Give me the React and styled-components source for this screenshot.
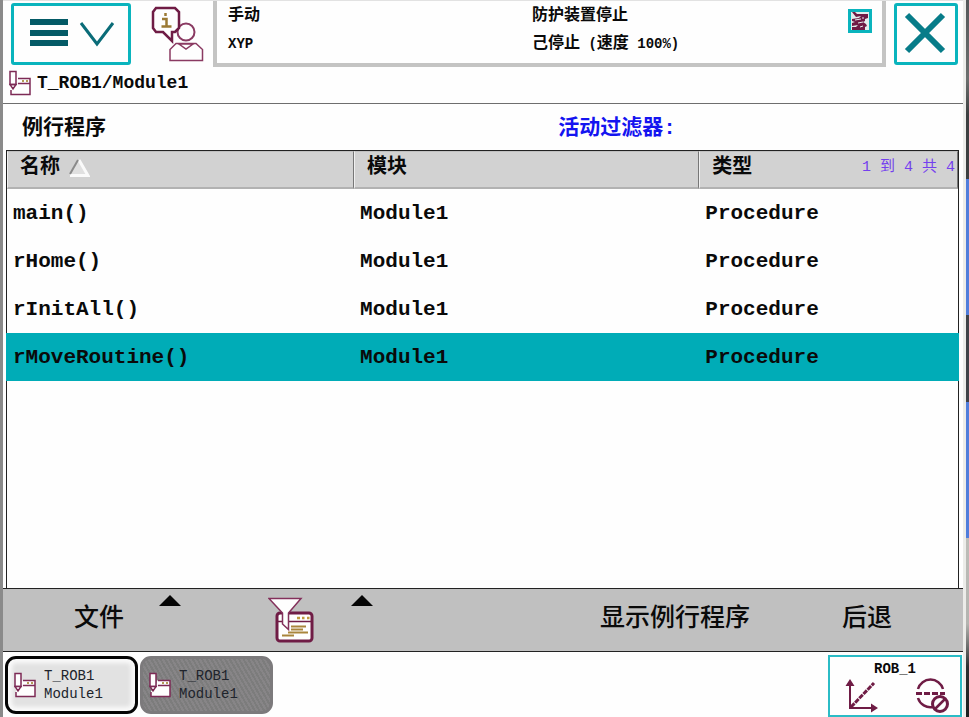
import React from "react";
import styled, { createGlobalStyle } from "styled-components";

const MONO = '"Liberation Mono", "Noto Sans CJK SC", monospace';
const PLUM = "#6f1c45";
const TEAL = "#0ab4bd";

const GlobalStyle = createGlobalStyle`
  *, *::before, *::after { box-sizing: border-box; }
  body { margin: 0; background: #fefefe; }
  button { font: inherit; color: inherit; padding: 0; margin: 0; border: 0; border-radius: 0; background: none; cursor: pointer; }
`;

const Page = styled.div`
  display: flex;
  min-height: 100vh;
  border-left: 3px solid #8a8a8a;
  font-family: ${MONO};
  font-weight: 700;
  color: #0a0a0a;
`;

const Screen = styled.div`
  flex: 1;
  min-width: 0;
  display: flex;
  flex-direction: column;
  border-top: 1px solid #e2e2e2;
  background: #fefefe;
`;

const DesktopEdge = styled.div`
  width: 6px;
  border-left: 3px solid #ecece9;
  background: linear-gradient(
    #55585a 0, #6c6f6e 11%, #3c3f40 16%, #3c3f40 25%,
    #4f7ddb 25%, #4f7ddb 44%, #404348 44%, #404348 56%,
    #4f7ddb 56%, #4f7ddb 75%, #bdbdb8 75%, #b4b4b0 87%,
    #2c2e30 93%, #1c1d1e 100%
  );
`;

const TopBar = styled.header`
  display: flex;
  height: 66px;
`;

const MenuButton = styled.button`
  width: 120px;
  height: 62px;
  margin: 2px 0 0 8px;
  border: 3px solid ${TEAL};
  border-radius: 3px;
  background: #fefefe;
  svg { display: block; }
`;

const CloseButton = styled(MenuButton)`
  width: 64px;
  margin: 2px 5px 0 8px;
`;

const OperatorButton = styled.button`
  display: flex;
  width: 82px;
  padding: 5px 0 0 20px;
`;

const StatusPanel = styled.section`
  flex: 1;
  display: grid;
  grid-template-columns: 304px 1fr auto;
  padding: 0 10px 0 11px;
  border: solid #c4c4c3;
  border-width: 0 4px 4px;
`;

const StatusColumn = styled.div`
  padding-top: 1px;
  font-size: 16px;
  line-height: 28px;
  white-space: nowrap;
`;

const Latin = styled.span`
  font-size: 14px;
`;

const UnitBadge = styled.span`
  display: block;
  width: 24px;
  height: 24px;
  margin-top: 8px;
  border: 3px solid ${TEAL};
  background: #e4eeee;
  svg { display: block; }
`;

const PathBar = styled.div`
  display: flex;
  align-items: center;
  gap: 6px;
  height: 37px;
  padding: 0 0 4px 6px;
  border-bottom: 1px solid #6e6e6e;
  font-size: 18px;
`;

const FilterBar = styled.div`
  display: grid;
  grid-template-columns: 57% 1fr;
  align-items: center;
  height: 46px;
  padding: 0 0 4px 19px;
  font-size: 21px;
`;

const ActiveFilter = styled.span`
  color: #1414f0;
`;

const ListFrame = styled.div`
  flex: 1;
  margin: 0 4px 0 3px;
  border: solid #222;
  border-width: 1px 1px 0;
`;

const Table = styled.table`
  width: 100%;
  table-layout: fixed;
  border-collapse: separate;
  border-spacing: 0;
`;

const Heading = styled.th`
  width: ${(p) => p.$width};
  height: 38px;
  padding: 0 2px 4px 12px;
  background: #d2d2d2;
  border: solid;
  border-width: 1px 1px 2px;
  border-color: #c0c0c0 #777 #b2b2b2 #f0f0f0;
  text-align: left;
  font-size: 20px;
  line-height: 24px;
`;

const HeadingContent = styled.div`
  display: flex;
  align-items: center;
  justify-content: ${(p) => (p.$spread ? "space-between" : "flex-start")};
  gap: 8px;
  white-space: nowrap;
`;

const RecordCount = styled.span`
  color: #7440ee;
  font-size: 15px;
  font-weight: 400;
`;

const Row = styled.tr`
  height: 48px;
  background: ${(p) => (p.$selected ? "#00acb7" : "transparent")};
  box-shadow: ${(p) => (p.$selected ? "-1px 0 #00acb7, 1px 0 #00acb7" : "none")};
`;

const Cell = styled.td`
  padding: 2px 0 0 6px;
  font-size: 21px;
  line-height: 24px;
  white-space: nowrap;
`;

const CommandBar = styled.nav`
  display: grid;
  grid-template-columns: repeat(5, 1fr);
  height: 64px;
  border: solid #222;
  border-width: 1px 0;
  background: #c0c0c0;
`;

const Command = styled.button`
  position: relative;
  grid-column: ${(p) => p.$slot};
  display: flex;
  align-items: center;
  justify-content: center;
  font-size: 25px;
  font-weight: 500;
  line-height: 36px;
  white-space: nowrap;
`;

const Caret = styled.svg`
  position: absolute;
  top: 6px;
  right: 14px;
`;

const TaskBar = styled.footer`
  display: flex;
  gap: 2px;
  height: 65px;
  padding: 3px 1px 0 2px;
`;

const TaskTab = styled.button`
  display: flex;
  align-items: center;
  gap: 8px;
  width: 133px;
  height: 58px;
  margin-top: 1px;
  padding-left: 6px;
  border: 3px solid ${(p) => (p.$active ? "#050505" : "#7c7a7c")};
  border-radius: 11px;
  background: ${(p) =>
    p.$active
      ? "#e2e2e2"
      : "repeating-linear-gradient(60deg, #7c7c7c 0, #7c7c7c 2px, #878587 2px, #878587 4px)"};
  box-shadow: ${(p) => (p.$active ? "inset 0 0 4px 4px #fafafa" : "none")};
  color: #20242c;
  text-align: left;
  font-size: 14px;
  font-weight: 400;
  line-height: 18px;
`;

const TabLabel = styled.span`
  display: flex;
  flex-direction: column;
`;

const UnitButton = styled.button`
  display: flex;
  flex-direction: column;
  align-items: center;
  width: 134px;
  height: 62px;
  margin-left: auto;
  border: 2px solid #2bbcc6;
  background: #fefefe;
  font-size: 14px;
  line-height: 24px;
`;

const UnitIcons = styled.span`
  display: flex;
  justify-content: space-between;
  width: 100%;
  margin-top: -3px;
  padding: 0 9px 0 14px;
`;

const MenuIcon = () => (
  <svg width="114" height="56" viewBox="0 0 114 56" aria-hidden="true">
    <g fill="#045a66">
      <rect x="16" y="13" width="38" height="6" />
      <rect x="16" y="24" width="38" height="6" />
      <rect x="16" y="34" width="38" height="6" />
    </g>
    <path d="M67 17 83 38 99 17" fill="none" stroke="#0a6c78" strokeWidth="3" />
  </svg>
);

const CloseIcon = () => (
  <svg width="58" height="56" viewBox="0 0 58 56" aria-hidden="true">
    <path d="M10 9 46 45M46 9 10 45" fill="none" stroke="#077c89" strokeWidth="6" />
  </svg>
);

const OperatorIcon = () => (
  <svg width="53" height="56" viewBox="0 0 53 56" aria-hidden="true">
    <g fill="#fefefe" stroke="#8a3a62">
      <circle cx="35" cy="26" r="8.5" strokeWidth="2" />
      <path d="M19 54.5V43.5L25 37.5H45L51.5 43.5V54.5Z" strokeWidth="1.5" />
      <path d="M28 38H42L35 43Z" strokeWidth="1.5" />
      <path
        d="M5 2H24L28 6V22L24 26H21V35L12 26H5L2 22V6Z"
        stroke={PLUM}
        strokeWidth="2.5"
      />
    </g>
    <path
      d="M14.500 7V10M11 13H15.500V20M10.500 20.500H20.500"
      fill="none"
      stroke="#9b7a34"
      strokeWidth="2.5"
    />
  </svg>
);

const ProgramIcon = ({ filled }) => (
  <svg width="22" height="26" viewBox="0 0 22 26" aria-hidden="true">
    <g stroke="#7d2a55" strokeWidth="1.5" fill="none">
      {filled && <path d="M8 8.5H21V24.5H2V19L7 14Z" fill="#fefefe" stroke="none" />}
      <path d="M9 8.5H21V24.5H2V20M9 13.5H21" />
      <path d="M1 1.5H7V14.5H1Z" fill={filled ? "#fefefe" : "none"} />
      <path d="M1 14.5H7L4 19Z" fill={filled ? "#fefefe" : "none"} />
      <path d="M4 17V19" strokeWidth="2" />
    </g>
    <path d="M13 11H15M17 11H19" stroke="#b39a55" strokeWidth="2" />
  </svg>
);

const FilterIcon = () => (
  <svg width="46" height="46" viewBox="0 0 46 46" aria-hidden="true">
    <rect x="9" y="16" width="35" height="28" rx="3" fill="#fefefe" stroke={PLUM} strokeWidth="3" />
    <path d="M9 24.5H44" stroke={PLUM} strokeWidth="1.5" />
    <path
      d="M1 1.5H33L20.5 16V32.5L14.5 27V16Z"
      fill="#fefefe"
      stroke="#83305b"
      strokeWidth="1.5"
    />
    <path d="M29 21H32M34 21H36.5M39 21H41.5" stroke="#c09a3e" strokeWidth="2.5" />
    <path
      d="M23 29.5H38M23 32.5H35M20 35.5H40M14 38.5H26"
      stroke="#a9863c"
      strokeWidth="1.8"
    />
  </svg>
);

const RobotIcon = () => (
  <svg width="18" height="18" viewBox="0 0 18 18" aria-hidden="true">
    <path
      d="M1 0H4L6 2H17V6L14 7V9L12 10L15 12L16 14L14 15V18H1V15H5L7 13L1 14V11L4 10L1 9V7L8 6L10 4L5 5Z"
      fill={PLUM}
    />
    <path d="M4 8 10 7M7 11 12 10M9 15 12 14M12 5V7" stroke="#e4eeee" strokeWidth="1" />
  </svg>
);

const SortIcon = () => (
  <svg width="22" height="20" viewBox="0 0 22 20" aria-hidden="true">
    <path d="M10 2 19 17H2Z" fill="#e0e0e0" />
    <path d="M11 2 20 17.5H2" fill="none" stroke="#fafafa" strokeWidth="3" />
    <path d="M2 16 10 2" stroke="#8a8a8a" strokeWidth="2" />
  </svg>
);

const AxesIcon = () => (
  <svg width="36" height="36" viewBox="0 0 36 36" aria-hidden="true">
    <path d="M6 5V30H29" fill="none" stroke={PLUM} strokeWidth="2" />
    <path d="M6 1 10.5 8H1.5ZM34 30 27 34.5V25.5Z" fill={PLUM} />
    <path d="M7 29 30 5" fill="none" stroke={PLUM} strokeWidth="3" strokeDasharray="5 1" />
  </svg>
);

const JogLockIcon = () => (
  <svg width="36" height="36" viewBox="0 0 36 36" aria-hidden="true">
    <g fill="none" stroke={PLUM}>
      <path d="M3 11A13 13 0 0 1 28 11M3 20A13 13 0 0 0 18 29" strokeWidth="2.5" />
      <path d="M1 15.5H30" strokeWidth="3" strokeDasharray="6 2" />
      <circle cx="25" cy="26" r="7.5" strokeWidth="3" fill="#fefefe" />
      <path d="M20 31 30 21" strokeWidth="2.5" />
    </g>
  </svg>
);

const UpCaret = () => (
  <Caret width="22" height="11" viewBox="0 0 22 11" aria-hidden="true">
    <path d="M11 0 22 11H0Z" fill="#050505" />
  </Caret>
);

const ProgramTab = ({ active }) => (
  <TaskTab type="button" $active={active} aria-pressed={active}>
    <ProgramIcon filled />
    <TabLabel>
      <span>T_ROB1</span>
      <span>Module1</span>
    </TabLabel>
  </TaskTab>
);

const routines = [
  { name: "main()", module: "Module1", type: "Procedure" },
  { name: "rHome()", module: "Module1", type: "Procedure" },
  { name: "rInitAll()", module: "Module1", type: "Procedure" },
  { name: "rMoveRoutine()", module: "Module1", type: "Procedure", selected: true },
];

export default function App() {
  return (
    <Page>
      <GlobalStyle />
      <Screen>
        <TopBar>
          <MenuButton type="button" aria-label="菜单">
            <MenuIcon />
          </MenuButton>
          <OperatorButton type="button" aria-label="操作员">
            <OperatorIcon />
          </OperatorButton>
          <StatusPanel>
            <StatusColumn>
              <div>手动</div>
              <div>
                <Latin>XYP</Latin>
              </div>
            </StatusColumn>
            <StatusColumn>
              <div>防护装置停止</div>
              <div>
                己停止<Latin> (</Latin>速度<Latin> 100%)</Latin>
              </div>
            </StatusColumn>
            <UnitBadge>
              <RobotIcon />
            </UnitBadge>
          </StatusPanel>
          <CloseButton type="button" aria-label="关闭">
            <CloseIcon />
          </CloseButton>
        </TopBar>

        <PathBar>
          <ProgramIcon />
          <span>T_ROB1/Module1</span>
        </PathBar>

        <FilterBar>
          <span>例行程序</span>
          <ActiveFilter>活动过滤器:</ActiveFilter>
        </FilterBar>

        <ListFrame>
          <Table>
            <thead>
              <tr>
                <Heading $width="36.5%">
                  <HeadingContent>
                    <span>名称</span>
                    <SortIcon />
                  </HeadingContent>
                </Heading>
                <Heading $width="36.3%">模块</Heading>
                <Heading>
                  <HeadingContent $spread>
                    <span>类型</span>
                    <RecordCount>1 到 4 共 4</RecordCount>
                  </HeadingContent>
                </Heading>
              </tr>
            </thead>
            <tbody>
              {routines.map((r) => (
                <Row key={r.name} $selected={r.selected} aria-selected={!!r.selected}>
                  <Cell>{r.name}</Cell>
                  <Cell>{r.module}</Cell>
                  <Cell>{r.type}</Cell>
                </Row>
              ))}
            </tbody>
          </Table>
        </ListFrame>

        <CommandBar>
          <Command type="button" $slot={1}>
            文件
            <UpCaret />
          </Command>
          <Command type="button" $slot={2} aria-label="过滤器">
            <FilterIcon />
            <UpCaret />
          </Command>
          <Command type="button" $slot={4}>
            显示例行程序
          </Command>
          <Command type="button" $slot={5}>
            后退
          </Command>
        </CommandBar>

        <TaskBar>
          <ProgramTab active />
          <ProgramTab active={false} />
          <UnitButton type="button">
            <span>ROB_1</span>
            <UnitIcons>
              <AxesIcon />
              <JogLockIcon />
            </UnitIcons>
          </UnitButton>
        </TaskBar>
      </Screen>
      <DesktopEdge />
    </Page>
  );
}
